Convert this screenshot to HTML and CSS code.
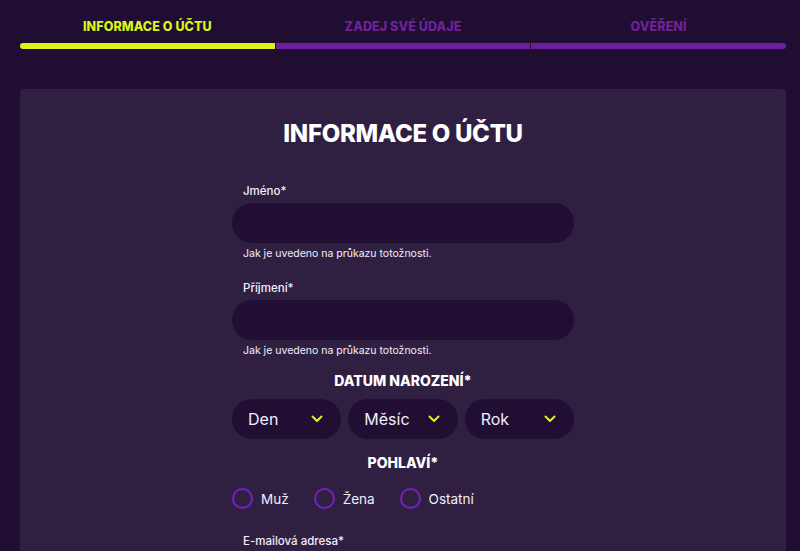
FILE: index.html
```html
<!DOCTYPE html>
<html lang="cs">
<head>
  <meta charset="UTF-8">
  <title>Registrace - Informace o účtu</title>
  <meta name="viewport" content="width=device-width, initial-scale=1.0">
  <link rel="stylesheet" href="styles.css">
</head>
<body>
  <!-- Kroky registrace -->
  <div class="steps">
    <div class="step active">
      <span class="step-label">INFORMACE O ÚČTU</span>
      <div class="step-bar"></div>
    </div>
    <div class="step">
      <span class="step-label">ZADEJ SVÉ ÚDAJE</span>
      <div class="step-bar"></div>
    </div>
    <div class="step">
      <span class="step-label">OVĚŘENÍ</span>
      <div class="step-bar"></div>
    </div>
  </div>

  <div class="card">
    <h1 class="card-title">INFORMACE O ÚČTU</h1>

    <form class="form">
      <div class="field">
        <label class="label" for="jmeno">Jméno*</label>
        <input class="input" id="jmeno" type="text">
        <p class="hint">Jak je uvedeno na průkazu totožnosti.</p>
      </div>

      <div class="field">
        <label class="label" for="prijmeni">Příjmení*</label>
        <input class="input" id="prijmeni" type="text">
        <p class="hint">Jak je uvedeno na průkazu totožnosti.</p>
      </div>

      <h2 class="section-title">DATUM NAROZENÍ*</h2>
      <div class="selects">
        <div class="select"><span>Den</span><svg class="chevron" viewBox="0 0 12 8"><path d="M1.5 1.5 6 6l4.5-4.5"/></svg></div>
        <div class="select"><span>Měsíc</span><svg class="chevron" viewBox="0 0 12 8"><path d="M1.5 1.5 6 6l4.5-4.5"/></svg></div>
        <div class="select"><span>Rok</span><svg class="chevron" viewBox="0 0 12 8"><path d="M1.5 1.5 6 6l4.5-4.5"/></svg></div>
      </div>

      <h2 class="section-title gender-title">POHLAVÍ*</h2>
      <div class="radios">
        <label class="radio"><span class="radio-dot"></span>Muž</label>
        <label class="radio"><span class="radio-dot"></span>Žena</label>
        <label class="radio"><span class="radio-dot"></span>Ostatní</label>
      </div>

      <div class="field">
        <label class="label" for="email">E-mailová adresa*</label>
      </div>
    </form>
  </div>
</body>
</html>
```

FILE: styles.css
```css
/* Zaklad */
*, *::before, *::after {
  box-sizing: border-box;
}
html, body {
  margin: 0;
  padding: 0;
  height: 100%;
  overflow: hidden;
}
body {
  background-color: #1f0e31;
  color: #f2eefa;
  font-family: 'Inter', 'Open Sans', sans-serif;
  padding: 0 14px 0 20px;
}

/* Kroky */
.steps {
  display: grid;
  grid-template-columns: repeat(3, 1fr);
  gap: 1px;
  padding-top: 19px;
}
.step {
  display: flex;
  flex-direction: column;
  align-items: center;
}
.step-label {
  font-size: 12.5px;
  font-weight: 800;
  letter-spacing: 0.1px;
  color: #6f2299;
  line-height: 16px;
  margin-bottom: 8px;
}
.step-bar {
  width: 100%;
  height: 6px;
  background: #6f1e9d;
}
.step:first-child .step-bar {
  border-radius: 3px 0 0 3px;
}
.step:last-child .step-bar {
  border-radius: 0 3px 3px 0;
}
.step.active .step-label {
  color: #d8f51c;
}
.step.active .step-bar {
  background: #d8f51c;
}

/* Karta */
.card {
  margin-top: 40px;
  background: #2f2042;
  border-radius: 4px;
  min-height: 500px;
  padding-top: 31px;
}
.card-title {
  margin: 0;
  text-align: center;
  font-size: 24px;
  font-weight: 800;
  letter-spacing: -0.3px;
  color: #ffffff;
  line-height: 28px;
}

/* Formular */
.form {
  width: 342px;
  margin: 0 auto;
  padding-top: 35px;
}
.field {
  display: flex;
  flex-direction: column;
}
.label {
  font-size: 11.5px;
  font-weight: 500;
  padding-left: 11px;
  line-height: 16px;
  margin-bottom: 4px;
}
.input {
  height: 40px;
  border: none;
  border-radius: 20px;
  background: #200f33;
  outline: none;
  font-family: inherit;
  color: #fff;
  padding: 0 16px;
}
.hint {
  margin: 4px 0 19px;
  padding-left: 11px;
  font-size: 10.5px;
  line-height: 14px;
}
.field + .section-title {
  margin-top: -5px;
}

.section-title {
  margin: 0 0 9px;
  text-align: center;
  font-size: 14px;
  font-weight: 800;
  letter-spacing: 0;
  line-height: 18px;
  color: #fff;
}
.gender-title {
  margin-bottom: 16px;
}

.selects {
  display: grid;
  grid-template-columns: repeat(3, 1fr);
  gap: 7px;
  margin-bottom: 15px;
}
.select {
  height: 40px;
  border-radius: 20px;
  background: #200f33;
  display: flex;
  align-items: center;
  justify-content: space-between;
  padding: 0 18px 0 16px;
  font-size: 16px;
}
.chevron {
  width: 12px;
  height: 8px;
  fill: none;
  stroke: #d8f51c;
  stroke-width: 2;
  stroke-linecap: round;
  stroke-linejoin: round;
}

.radios {
  display: flex;
  gap: 25px;
  margin-bottom: 24px;
}
.radio {
  display: flex;
  align-items: center;
  gap: 8px;
  font-size: 13.5px;
}
.radio-dot {
  width: 21px;
  height: 21px;
  border-radius: 50%;
  border: 2px solid #7420bb;
}
```
